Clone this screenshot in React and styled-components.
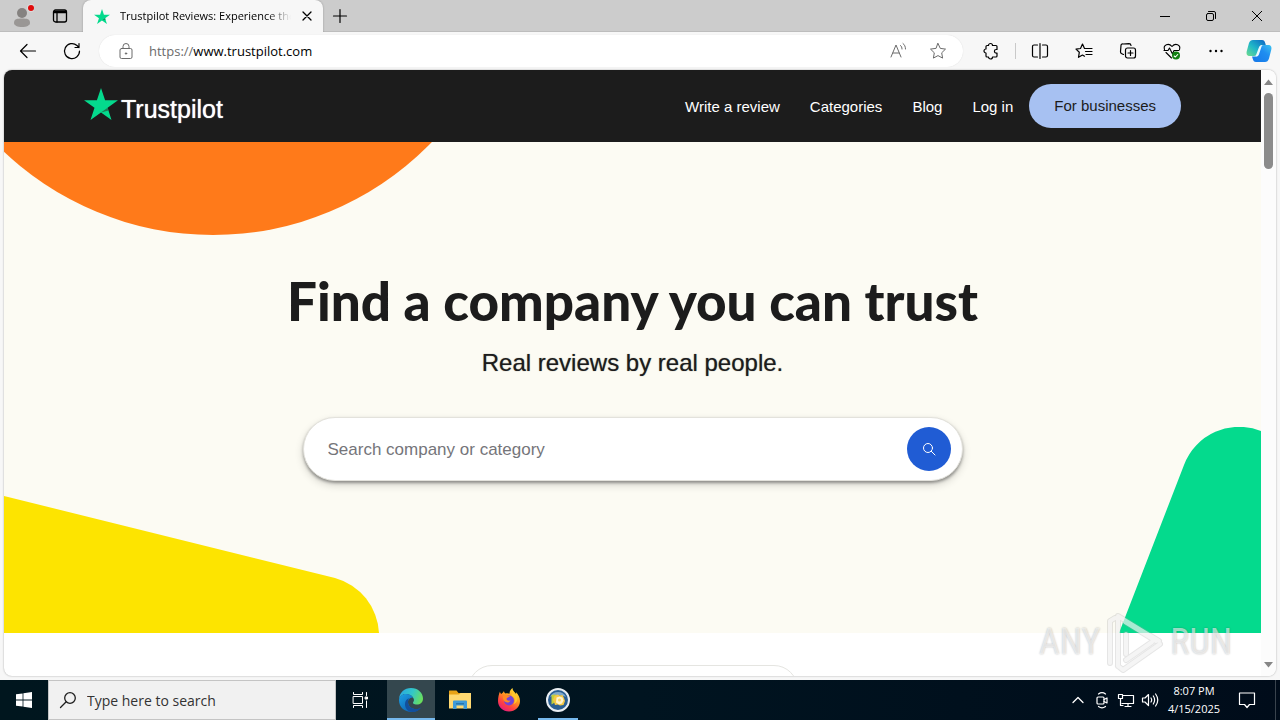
import React from "react";
import styled, { createGlobalStyle, css } from "styled-components";

const uiFont = '"Open Sans", "Noto Sans", sans-serif';
const siteFont = '"Liberation Sans", Arial, sans-serif';

const GlobalStyle = createGlobalStyle`
  *, *::before, *::after { box-sizing: border-box; }
  body { margin: 0; font-family: ${uiFont}; color: #000; }
  button, input { font: inherit; color: inherit; margin: 0; }
  button { border: 0; padding: 0; background: none; cursor: pointer; }
  svg { display: block; flex: none; }
`;

const Desktop = styled.div`
  position: relative;
  display: flex;
  flex-direction: column;
  height: 100vh;
  overflow: hidden;
  background: #f7f7f7;
`;

/* ---------- browser chrome ---------- */

const TabStrip = styled.div`
  display: flex;
  flex: none;
  height: 32px;
  background: #cccccc;
  box-shadow: inset 0 -1px #bdbdbd;
`;

const StripButton = styled.button`
  display: grid;
  place-items: center;
  width: ${(p) => p.$width}px;
`;

const Tab = styled.div`
  display: flex;
  align-items: center;
  gap: 10px;
  width: 240px;
  margin-left: 7px;
  padding: 0 10px 0 11px;
  background: #f7f7f7;
  border-radius: 8px 8px 0 0;
  box-shadow: 0 0 2px rgba(0, 0, 0, 0.3);
`;

const TabTitle = styled.span`
  flex: 1;
  overflow: hidden;
  white-space: nowrap;
  font-size: 11px;
  line-height: 16px;
  mask-image: linear-gradient(to right, #000 86%, transparent);
`;

const WindowControls = styled.div`
  display: flex;
  margin-left: auto;
`;

const Toolbar = styled.div`
  display: flex;
  flex: none;
  align-items: center;
  height: 38px;
  padding-left: 6px;
  background: #f7f7f7;
`;

const ToolButton = styled.button`
  display: grid;
  place-items: center;
  width: ${(p) => p.$width || 44}px;
  height: 32px;
`;

const AddressBar = styled.div`
  display: flex;
  flex: 1;
  align-items: center;
  height: 32px;
  margin: 0 6px 0 5px;
  padding: 0 6px 0 17px;
  background: #fff;
  border-radius: 16px;
  box-shadow: 0 0 1px rgba(0, 0, 0, 0.15);
  font-size: 13px;
`;

const Scheme = styled.label`
  margin-left: 13px;
  color: #6b6b6b;
`;

const AddressInput = styled.input`
  flex: 1;
  min-width: 0;
  padding: 0;
  border: 0;
  outline: 0;
  background: none;
`;

const Divider = styled.span`
  width: 1px;
  height: 16px;
  margin: 0 2px;
  background: #c9c9c9;
`;

/* ---------- web page ---------- */

const Viewport = styled.div`
  display: flex;
  flex: 1;
  min-height: 0;
  margin: 0 4px 4px;
  overflow: hidden;
  background: #fff;
  border-radius: 8px;
  box-shadow: 0 0 2px rgba(0, 0, 0, 0.35);
`;

const Page = styled.div`
  flex: 1;
  min-width: 0;
  overflow: hidden;
  font-family: ${siteFont};
  color: #1c1c1c;
`;

const Scrollbar = styled.div`
  display: flex;
  flex: none;
  flex-direction: column;
  align-items: center;
  width: 15px;
  padding: 9px 0 8px;
  background: #fcfcfc;
`;

const Thumb = styled.div`
  width: 9px;
  height: 76px;
  margin: 8px 0 auto;
  border-radius: 5px;
  background: #8b8b8b;
`;

const SiteHeader = styled.header`
  display: flex;
  align-items: center;
  justify-content: space-between;
  height: 72px;
  padding: 0 80px;
  background: #1c1c1c;
  color: #fff;
`;

const Logo = styled.a`
  display: flex;
  gap: 3px;
  height: 36px;
  color: #fff;
  font-size: 25px;
  line-height: 42px;
  text-decoration: none;
`;

const Wordmark = styled.span`
  text-shadow: 0 0 1px #fff;
`;

const Nav = styled.nav`
  display: flex;
  align-items: center;
  gap: 30px;
  font-size: 15px;
`;

const NavLink = styled.a`
  color: #fff;
  text-decoration: none;
`;

const BusinessLink = styled.a`
  margin-left: -14px;
  padding: 0 25px;
  border-radius: 22px;
  background: #a7c1f2;
  color: #1c1c1c;
  line-height: 44px;
  text-decoration: none;
`;

const Hero = styled.section`
  position: relative;
  display: flex;
  flex-direction: column;
  align-items: center;
  min-height: 491px;
  padding: 127px 24px 0;
  overflow: hidden;
  background: #fcfbf3;
`;

const Shape = styled.svg`
  position: absolute;
  ${(p) => (p.$corner === "top" ? css`top: 0; left: 0;` : "")}
  ${(p) => (p.$corner === "left" ? css`bottom: 0; left: 0;` : "")}
  ${(p) => (p.$corner === "right" ? css`bottom: 0; right: 0;` : "")}
`;

const Headline = styled.h1`
  position: relative;
  margin: 0;
  font-family: Lato, sans-serif;
  font-size: 53px;
  font-weight: 900;
  line-height: 64px;
`;

const Tagline = styled.p`
  position: relative;
  margin: 14px 0 38px;
  font-size: 24px;
  line-height: 32px;
  text-shadow: 0 0 1px rgba(28, 28, 28, 0.6);
`;

const SearchForm = styled.form`
  position: relative;
  display: flex;
  align-items: center;
  width: 100%;
  max-width: 660px;
  height: 64px;
  padding: 0 11px 0 24px;
  border: 1px solid #e3e2dc;
  border-radius: 32px;
  background: #fff;
  box-shadow: 0 2px 3px rgba(0, 0, 0, 0.35), 0 4px 8px rgba(0, 0, 0, 0.16);
`;

const SearchInput = styled.input`
  flex: 1;
  min-width: 0;
  padding: 2px 0 0;
  border: 0;
  outline: 0;
  font-size: 17px;
  background: none;
  &::placeholder { color: #75757a; opacity: 1; }
`;

const SearchButton = styled.button`
  display: grid;
  place-items: center;
  width: 44px;
  height: 44px;
  border-radius: 50%;
  background: #205cd4;
`;

const NextSection = styled.section`
  display: flex;
  justify-content: center;
  padding-top: 32px;
`;

const Pill = styled.div`
  width: 330px;
  height: 48px;
  border: 1px solid #e5e5e1;
  border-radius: 24px;
`;

/* ---------- recorder watermark ---------- */

const Watermark = styled.div`
  position: absolute;
  right: 48px;
  bottom: 46px;
  display: flex;
  align-items: center;
  gap: 6px;
  color: rgba(255, 255, 255, 0.6);
  font-family: "Liberation Sans Narrow", "Roboto Condensed", "Liberation Sans", sans-serif;
  font-size: 36px;
  line-height: 64px;
  text-shadow: 0 0 2px rgba(0, 0, 0, 0.28);
  pointer-events: none;
`;

/* ---------- taskbar ---------- */

const Taskbar = styled.footer`
  display: flex;
  flex: none;
  height: 40px;
  background: linear-gradient(to right, #00161e, #001420 50%, #000c1a);
  color: #fff;
`;

const TaskButton = styled.button`
  display: grid;
  place-items: center;
  width: ${(p) => p.$width || 48}px;
  margin-right: ${(p) => (p.$app ? 1 : 0)}px;
  background: ${(p) => (p.$active ? "#34474e" : "none")};
  box-shadow: ${(p) => (p.$active ? "inset 0 -2px #76b9ed" : "none")};
`;

const TaskView = styled(TaskButton)`
  margin-right: 3px;
`;

const RunningButton = styled(TaskButton)`
  background: linear-gradient(#76b9ed, #76b9ed) center bottom / 40px 2px no-repeat;
`;

const TaskSearch = styled.label`
  display: flex;
  align-items: center;
  gap: 10px;
  width: 288px;
  padding-left: 10px;
  border: 1px solid #c4c4c4;
  background: #f1f1f1;
  color: #1f1f1f;
  font-size: 14px;
`;

const TaskInput = styled.input`
  flex: 1;
  min-width: 0;
  padding: 0;
  border: 0;
  outline: 0;
  background: none;
  &::placeholder { color: #333; opacity: 1; }
`;

const Tray = styled.div`
  display: flex;
  margin-left: auto;
  margin-right: 4px;
  padding-right: 7px;
  border-right: 1px solid #39434d;
`;

const Clock = styled.time`
  display: flex;
  flex-direction: column;
  justify-content: center;
  width: 64px;
  font-size: 11px;
  line-height: 18px;
  text-align: center;
`;

function Icon({ size = 20, width = 1, children, color = "currentColor", box = 20 }) {
  return (
    <svg width={size} height={size} viewBox={`0 0 ${box} ${box}`} fill="none" stroke={color}
      strokeWidth={width} strokeLinecap="round" strokeLinejoin="round" aria-hidden="true">
      {children}
    </svg>
  );
}

function StarMark({ width, height }) {
  return (
    <svg width={width} height={height} viewBox="0 0 34 32" aria-hidden="true">
      <path fill="#04da8d" d="M17 0l4.1 12.2H34L23.6 19.8 27.5 32 17 24.5 6.5 32l4-12.2L0 12.2h12.9z" />
      <path fill="#1c7a55" d="M24.5 22.6L23.6 19.8 17 24.5z" />
    </svg>
  );
}

function BrowserTabs() {
  return (
    <TabStrip>
      <StripButton $width={44} aria-label="Profile">
        <svg width="24" height="26" viewBox="0 0 24 26">
          <circle cx="12" cy="10" r="5" fill="#858280" />
          <path d="M4 20c0-4 3-4.500 8-4.500s8 .5 8 4.500c0 2.500-3.500 4-8 4s-8-1.500-8-4z" fill="#9a9795" />
          <circle cx="21" cy="5" r="4" fill="#dcdcdc" />
          <circle cx="21" cy="5" r="3" fill="#e00b0b" />
        </svg>
      </StripButton>
      <StripButton $width={32} aria-label="Workspaces">
        <Icon size={16} box={16} width={1.300}>
          <rect x="1.500" y="2" width="13" height="12" rx="2" />
          <path d="M2 4.500h12M5 5v9" />
          <path d="M2.500 3.300h11" />
        </Icon>
      </StripButton>
      <Tab>
        <StarMark width={16} height={15} />
        <TabTitle>Trustpilot Reviews: Experience the</TabTitle>
        <StripButton $width={12} aria-label="Close tab">
          <Icon size={10} box={10} width={1.300}><path d="M1 1l8 8M9 1L1 9" /></Icon>
        </StripButton>
      </Tab>
      <StripButton $width={34} aria-label="New tab">
        <Icon size={16} box={16} width={1.200}><path d="M8 1.500v13M1.500 8h13" /></Icon>
      </StripButton>
      <WindowControls>
        <StripButton $width={46} aria-label="Minimize">
          <Icon size={10} box={10}><path d="M0 5.500h10" /></Icon>
        </StripButton>
        <StripButton $width={46} aria-label="Restore">
          <Icon size={10} box={10}>
            <rect x=".5" y="2.500" width="7" height="7" rx="1.500" />
            <path d="M2.500.5H8A1.500 1.500 0 0 1 9.500 2v5.500" />
          </Icon>
        </StripButton>
        <StripButton $width={46} aria-label="Close">
          <Icon size={10} box={10}><path d="M0 0l10 10M10 0L0 10" /></Icon>
        </StripButton>
      </WindowControls>
    </TabStrip>
  );
}

const starPath = "M10 2.500l2.300 4.900 5.200.7-3.800 3.700.9 5.300-4.600-2.500-4.600 2.500.9-5.300L2.500 8.100l5.200-.7z";

function BrowserToolbar() {
  return (
    <Toolbar>
      <ToolButton aria-label="Back">
        <Icon width={1.200}><path d="M17.500 10h-15M9 3.500L2.500 10 9 16.500" /></Icon>
      </ToolButton>
      <ToolButton aria-label="Refresh">
        <Icon width={1.200}><path d="M17.500 10A7.500 7.500 0 1 1 15 4.500L17 6.500M17 2.500v4h-4" /></Icon>
      </ToolButton>
      <AddressBar>
        <Icon color="#6b6b6b">
          <rect x="4" y="7.500" width="12" height="10" rx="1.500" />
          <path d="M7 7.500V5.500a3 3 0 0 1 6 0v2" />
          <circle cx="10" cy="12.500" r=".7" fill="#6b6b6b" />
        </Icon>
        <Scheme htmlFor="address">https://</Scheme>
        <AddressInput id="address" defaultValue="www.trustpilot.com" />
        <ToolButton $width={40} aria-label="Read aloud">
          <Icon color="#6b6b6b">
            <path d="M2 16L7 4l5 12M4 12h6M11.500 4.500c1 .8 1.500 1.800 1.500 3.500M14 2.500c1.500 1.200 2.500 3 2.500 5.500" />
          </Icon>
        </ToolButton>
        <ToolButton $width={38} aria-label="Add to favorites">
          <Icon color="#6b6b6b"><path d={starPath} /></Icon>
        </ToolButton>
      </AddressBar>
      <ToolButton aria-label="Extensions">
        <Icon width={1.200}>
          <path d="M7.500 4.500a2 2 0 0 1 4 0H15a1 1 0 0 1 1 1v3h-.8a1.800 1.800 0 0 0 0 3.600h.8V15a1 1 0 0 1-1 1h-3.500a2 2 0 0 1-4 0H6a1 1 0 0 1-1-1v-3a2 2 0 0 1 0-4V5.500a1 1 0 0 1 1-1z" />
        </Icon>
      </ToolButton>
      <Divider />
      <ToolButton aria-label="Split screen">
        <Icon width={1.200}><path d="M7.500 4H4A1.500 1.500 0 0 0 2.500 5.500v9A1.500 1.500 0 0 0 4 16h3.500M12.500 4H16a1.500 1.500 0 0 1 1.500 1.500v9A1.500 1.500 0 0 1 16 16h-3.500M10 2.500v15" /></Icon>
      </ToolButton>
      <ToolButton aria-label="Favorites">
        <Icon width={1.200}><path d="M11.500 7.500h-1L8.500 3 6.500 7.500l-4.500.6 3.300 3.200-.8 5 4-2.300 2 1.200M12 7.500h6M11.500 10.500H18M12 13.500h6" /></Icon>
      </ToolButton>
      <ToolButton aria-label="Collections">
        <Icon width={1.200}>
          <rect x="7.500" y="7" width="10" height="10" rx="2" />
          <path d="M12.500 9.500v5M10 12h5M5.500 13.500L3.800 12.700A2 2 0 0 1 2.500 10.500L3 4.500A1.500 1.500 0 0 1 5 3l6-.3a2 2 0 0 1 2 1.800" />
        </Icon>
      </ToolButton>
      <ToolButton aria-label="Browser essentials">
        <Icon width={1.100}>
          <path d="M2.500 8.500C1 4 6.500 1.500 10 5.500c3.500-4 9-1.500 7.500 3M4 11.500l5.500 5.500M2 9.500h4l1.500-2.500 3 6 1.500-3.500h5" />
          <circle cx="14" cy="14.500" r="4" fill="#128012" stroke="none" />
          <path d="M12.200 15l1.200 1 2.300-2.500" stroke="#fff" />
        </Icon>
      </ToolButton>
      <ToolButton aria-label="Settings and more">
        <Icon>
          <g fill="currentColor" stroke="none">
            <circle cx="4.500" cy="10" r="1.200" /><circle cx="10" cy="10" r="1.200" /><circle cx="15.500" cy="10" r="1.200" />
          </g>
        </Icon>
      </ToolButton>
      <ToolButton $width={42} aria-label="Copilot">
        <svg width="26" height="24" viewBox="0 0 26 24">
          <defs>
            <linearGradient id="cpA" x1="0" y1="1" x2="1" y2="0">
              <stop offset="0" stopColor="#6fdc8c" /><stop offset=".45" stopColor="#20b8c8" /><stop offset="1" stopColor="#0b62c4" />
            </linearGradient>
            <linearGradient id="cpB" x1="0" y1="1" x2="1" y2="0">
              <stop offset="0" stopColor="#1677e8" /><stop offset=".6" stopColor="#1f8df0" /><stop offset="1" stopColor="#3cc4f0" />
            </linearGradient>
          </defs>
          <path fill="url(#cpA)" d="M7 1h9c2 0 2.600 1 3.200 3l.6 2h-3c-2 0-3 1-3.600 3l-1.700 5.500C11 16 10 17 8 17H4c-3 0-4-2-3.200-5L3 4c.8-2 2-3 4-3z" />
          <path fill="url(#cpB)" d="M19 23h-9c-2 0-2.600-1-3.200-3L6 17.500h3c2 0 3-1 3.600-3L14.300 9c.6-2 1.700-3 3.700-3h4c3 0 4 2 3.200 5L23 19.500c-.8 2.500-2 3.500-4 3.500z" />
          <path fill="#e9f9ff" d="M12.500 9.500c.7-2.300 1.800-3.500 3.500-3.500l-.6 2-2.300 7c-.8 2-1.600 2.600-3.600 2.500z" />
        </svg>
      </ToolButton>
    </Toolbar>
  );
}

function Site() {
  return (
    <Page>
      <SiteHeader>
        <Logo href="#home">
          <StarMark width={34} height={32} />
          <Wordmark>Trustpilot</Wordmark>
        </Logo>
        <Nav>
          <NavLink href="#write">Write a review</NavLink>
          <NavLink href="#categories">Categories</NavLink>
          <NavLink href="#blog">Blog</NavLink>
          <NavLink href="#login">Log in</NavLink>
          <BusinessLink href="#business">For businesses</BusinessLink>
        </Nav>
      </SiteHeader>
      <Hero>
        <Shape $corner="top" width="513" height="93" viewBox="0 0 513 93" aria-hidden="true">
          <circle cx="209" cy="-211" r="304" fill="#ff7a1a" />
        </Shape>
        <Shape $corner="left" width="376" height="137" viewBox="0 0 376 137" aria-hidden="true">
          <path d="M0 0L331 82A60 60 0 0 1 375 137H0z" fill="#fde400" />
        </Shape>
        <Shape $corner="right" width="143" height="206" viewBox="0 0 143 206" aria-hidden="true">
          <path d="M1 206L66 38A59 59 0 0 1 143 4V206z" fill="#04da8d" />
        </Shape>
        <Headline>Find a company you can trust</Headline>
        <Tagline>Real reviews by real people.</Tagline>
        <SearchForm onSubmit={(e) => e.preventDefault()}>
          <SearchInput aria-label="Search company or category" placeholder="Search company or category" />
          <SearchButton aria-label="Search">
            <Icon size={14} box={14} color="#fff"><circle cx="6" cy="6" r="4.500" /><path d="M9.300 9.300l3.700 3.700" /></Icon>
          </SearchButton>
        </SearchForm>
      </Hero>
      <NextSection><Pill /></NextSection>
    </Page>
  );
}

function EdgeIcon() {
  return (
    <svg width="24" height="24" viewBox="0 0 24 24">
      <defs>
        <linearGradient id="edTop" x1="0" y1=".3" x2="1" y2=".6">
          <stop offset="0" stopColor="#2aa8e0" /><stop offset=".5" stopColor="#32c7c9" /><stop offset="1" stopColor="#6be05a" />
        </linearGradient>
        <linearGradient id="edLow" x1="0" y1="0" x2="1" y2="1">
          <stop offset="0" stopColor="#1ca0e4" /><stop offset="1" stopColor="#0a50a4" />
        </linearGradient>
      </defs>
      <path fill="url(#edTop)" d="M0 11C.5 4.500 5.500 0 12 0c7 0 12 5 12 10.500 0 4-3 6-6 6-3.500 0-4.500-1.400-3.800-2.300.8-1 1-2.200.5-3.400C13.500 7.500 10 6 7 6 3.500 6 1 8 0 11z" />
      <path fill="url(#edLow)" d="M0 12.500C0 8.500 3 6 7 6c3.500 0 6 1.600 7.200 3.600C11 9 9 11.500 9 14c0 4.500 4 7 8 7 2 0 3.500-.5 5-1.500-2 3-5.500 4.500-9.500 4.500C5.500 24 0 19 0 12.500z" />
      <path fill="#124f9c" d="M9 14c0 4.500 4 7 8 7 2 0 3.500-.5 5-1.500C19.500 23 16 24 14 24c-5 0-8-3.500-8-8 0-3 1.500-5 4.500-6-1 1-1.500 2.500-1.500 4z" />
    </svg>
  );
}

function FolderIcon() {
  return (
    <svg width="22" height="20" viewBox="0 0 22 20">
      <path fill="#e8a317" d="M0 1.500A.8.800 0 0 1 .8.500H7.500l2 2.500h11.700a.8.800 0 0 1 .8.800V6H0z" />
      <path fill="#ffd971" d="M0 4.500h10l1.500-1.500H22v15.500H0z" />
      <path fill="#3f9bd8" d="M4 19v-7.500A1 1 0 0 1 5 10.500h12a1 1 0 0 1 1 1V19h-3.500v-3.500h-7V19z" />
      <path fill="#2877ad" d="M7 13h8v1.500H7z" />
    </svg>
  );
}

function FirefoxIcon() {
  return (
    <svg width="24" height="24" viewBox="0 0 24 24">
      <defs>
        <linearGradient id="ffA" x1=".8" y1="0" x2=".2" y2="1">
          <stop offset="0" stopColor="#ffe53b" /><stop offset=".4" stopColor="#ff9a1f" /><stop offset=".7" stopColor="#ff4340" /><stop offset="1" stopColor="#e21587" />
        </linearGradient>
      </defs>
      <path fill="url(#ffA)" d="M3 3.500c0 1 .6 2 1.300 2.500C5.500 5 6 4.500 7 3c0 1 .6 2 1.500 2.500 1.500-.6 3-.2 4 .2C12.500 3 14 1 15.500 0c0 2.500 2 4 3.500 6 .2-.8.100-1.500-.2-2C21.500 6.500 23 9.500 23 13c0 6-5 10.500-11 10.500S1 19 1 13C1 9.500 1.800 6 3 3.500z" />
      <circle cx="12" cy="12.500" r="5" fill="#7442d8" />
      <path fill="#ff8a24" d="M6 8c2-1.500 5.500-1 7 1-1.500 0-3 .5-3.500 1.800 0 1.500 1.500 2.200 4 1.700-1 1.800-3 2.500-5 1.500C6.500 13 5.500 10.500 6 8z" />
      <path fill="#ffc52d" d="M14.500 7.500c3.500 1.500 4.500 5.500 2 8.500 3.500-1 5-5 3-9C19 6 17 4.500 16 3z" />
    </svg>
  );
}

function RoundAppIcon() {
  return (
    <svg width="24" height="24" viewBox="0 0 24 24">
      <circle cx="12" cy="12" r="11" fill="#2a5f93" stroke="#e9eef2" strokeWidth="2" />
      <path fill="#7fa9cb" d="M4 9a9 9 0 0 1 16 0c-4-2-12-2-16 0z" />
      <path fill="#c2cf3a" d="M5.500 7l4-.5 2 2.500-2 5-4 2.500z" />
      <path fill="#f6c945" d="M8.500 8l3-1.500 2 1 3-.5 1.500 3 1 3-1.500 4-3.500.5-2-1-3 .5-1-3-1-2z" />
      <path fill="#fff3cf" d="M10.500 9.500l3-1 3 1 1 3-1.500 3-3 1-3-2z" />
      <circle cx="13.500" cy="12" r="1.500" fill="#ffd95e" />
    </svg>
  );
}

function DesktopTaskbar() {
  return (
    <Taskbar>
      <TaskButton aria-label="Start">
        <svg width="16" height="16" viewBox="0 0 16 16" fill="#fff">
          <path d="M0 2.300L6.600 1.400V7.600H0zM7.400 1.300L16 0V7.600H7.400zM0 8.400H6.600V14.600L0 13.700zM7.400 8.400H16V16L7.400 14.700z" />
        </svg>
      </TaskButton>
      <TaskSearch>
        <Icon size={18} box={18} width={1.300}><circle cx="11" cy="7" r="5.300" /><path d="M7.200 10.800L1.500 16.500" /></Icon>
        <TaskInput placeholder="Type here to search" aria-label="Type here to search" />
      </TaskSearch>
      <TaskView aria-label="Task view">
        <Icon size={18} box={18}>
          <path d="M2.500 1.500v2h9v-2M2.500 16.500v-2h9v2M2.500 5.500h9v7h-9zM15.500 1.500v3M15.500 10v6.500" />
          <path d="M14.500 6h2v2h-2z" fill="#fff" />
        </Icon>
      </TaskView>
      <TaskButton $app $active aria-label="Edge"><EdgeIcon /></TaskButton>
      <TaskButton $app aria-label="File Explorer"><FolderIcon /></TaskButton>
      <TaskButton $app aria-label="Firefox"><FirefoxIcon /></TaskButton>
      <RunningButton $app aria-label="Application"><RoundAppIcon /></RunningButton>
      <Tray>
        <TaskButton $width={24} aria-label="Show hidden icons">
          <Icon size={12} box={12} width={1.300}><path d="M1 8.500l5-5 5 5" /></Icon>
        </TaskButton>
        <TaskButton $width={24} aria-label="Meet now">
          <Icon size={18} box={18} width={1.200}><rect x="4" y="6" width="7" height="7" rx="1" /><path d="M11 8.500l3-1.500v5l-3-1.500M5.500 3c2-1.500 5-1.500 7 0M5.500 15.500c2 1.500 5 1.500 7 0" /></Icon>
        </TaskButton>
        <TaskButton $width={24} aria-label="Network">
          <Icon size={18} box={18} width={1.200}><path d="M6 4.500h10.500v8H5M1.500 3.500h4v4h-4zM3.500 7.500v7H6M8 15.500h6M11 12.500v3" /></Icon>
        </TaskButton>
        <TaskButton $width={24} aria-label="Volume">
          <Icon size={18} box={18} width={1.200}><path d="M1.500 7v4H4l3.500 3.500v-11L4 7zM10 7c.8 1.200.8 2.800 0 4M12.300 5c1.600 2.400 1.600 5.600 0 8M14.600 3c2.600 3.600 2.600 8.400 0 12" /></Icon>
        </TaskButton>
        <Clock><span>8:07 PM</span><span>4/15/2025</span></Clock>
        <TaskButton $width={42} aria-label="Notifications">
          <Icon size={18} box={18} width={1.200}><path d="M1.500 2h15v11.500h-5L9 16.500 6.500 13.500h-5z" /></Icon>
        </TaskButton>
      </Tray>
    </Taskbar>
  );
}

const playBands = "M4 53V11l5-3M12 56V6L53 31M19 12l31 19M12 56l5 4 37-26M20 50l26-18M20 24v20";

export default function App() {
  return (
    <Desktop>
      <GlobalStyle />
      <BrowserTabs />
      <BrowserToolbar />
      <Viewport>
        <Site />
        <Scrollbar>
          <svg width="9" height="6" viewBox="0 0 9 6"><path d="M0 6L4.500.5 9 6z" fill="#868686" /></svg>
          <Thumb />
          <svg width="9" height="6" viewBox="0 0 9 6"><path d="M0 0L4.500 5.500 9 0z" fill="#868686" /></svg>
        </Scrollbar>
      </Viewport>
      <DesktopTaskbar />
      <Watermark aria-hidden="true">
        <span>ANY</span>
        <svg width="58" height="64" viewBox="0 0 58 64" fill="none" strokeLinejoin="round" strokeLinecap="round">
          <path d={playBands} stroke="rgba(160,160,160,.28)" strokeWidth="6" />
          <path d={playBands} stroke="rgba(255,255,255,.6)" strokeWidth="4" />
        </svg>
        <span>RUN</span>
      </Watermark>
    </Desktop>
  );
}
